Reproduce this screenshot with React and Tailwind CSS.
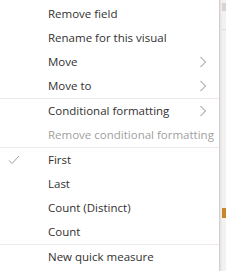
import React from 'react';

const Chevron = () => (
    <svg width="8" height="12" viewBox="0 0 8 12" className="text-[#8a8886]">
        <path d="M1.5 1 L6.5 6 L1.5 11" fill="none" stroke="currentColor" strokeWidth="1" />
    </svg>
);

const Check = () => (
    <svg width="12" height="10" viewBox="0 0 12 10" className="text-[#a19f9d]">
        <path d="M1 5.5 L4 8.5 L11 1" fill="none" stroke="currentColor" strokeWidth="1" />
    </svg>
);

function Item({ label, sub, checked, disabled }) {
    return (
        <div className="h-6 flex items-center relative">
            <div className="w-12 shrink-0 flex items-center pl-[8px]">
                {checked && <Check />}
            </div>
            <span className={disabled ? 'text-[#a19f9d]' : 'text-[#323130]'}>{label}</span>
            {sub && (
                <div className="ml-auto mr-[12px] flex items-center">
                    <Chevron />
                </div>
            )}
        </div>
    );
}

const Divider = () => <div className="h-px bg-[#edebe9]" />;

export default function App() {
    return (
        <div className="w-[226px] h-[271px] bg-[#f3f2f1] flex overflow-hidden" style={{ fontFamily: '"Open Sans", "Noto Sans", sans-serif' }}>
            {/* Context menu */}
            <div className="w-[220px] shrink-0 bg-white border-r border-[#d2d0ce] text-[11.5px] pt-[2px] shadow-[1px_0_2px_rgba(0,0,0,0.08)]">
                <Item label="Remove field" />
                <Item label="Rename for this visual" />
                <Item label="Move" sub />
                <Item label="Move to" sub />
                <Divider />
                <Item label="Conditional formatting" sub />
                <Item label="Remove conditional formatting" disabled />
                <Divider />
                <Item label="First" checked />
                <Item label="Last" />
                <Item label="Count (Distinct)" />
                <Item label="Count" />
                <Divider />
                <Item label="New quick measure" />
            </div>

            {/* Background pane peeking out */}
            <div className="flex-1 flex flex-col pl-[2px]">
                <div className="h-[8px] mt-[3px] bg-[#d9d4cf]" />
                <div className="h-px mt-[18px] bg-[#e1dfdd]" />
                <div className="h-[10px] mt-[178px] bg-[#c8872e]" />
            </div>
        </div>
    );
}
